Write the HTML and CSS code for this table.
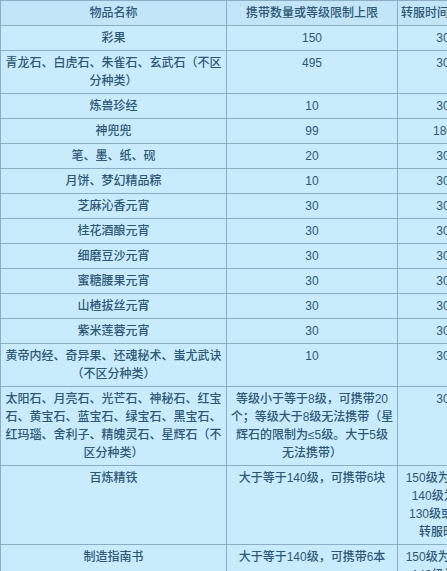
FILE: index.html
```html
<!DOCTYPE html>
<html lang="zh-CN">
<head>
<meta charset="utf-8">
<title>物品携带限制</title>
<link rel="stylesheet" href="styles.css">
</head>
<body>
<div class="frame">
<table class="limits">
  <colgroup>
    <col class="c-name">
    <col class="c-limit">
    <col class="c-time">
  </colgroup>
  <thead>
    <tr><th>物品名称</th><th>携带数量或等级限制上限</th><th>转服时间（天）</th></tr>
  </thead>
  <tbody>
    <tr><td>彩果</td><td>150</td><td>30</td></tr>
    <tr><td><span class="nw">青龙石、白虎石、朱雀石、玄武石（不区</span><br>分种类）</td><td>495</td><td>30</td></tr>
    <tr><td>炼兽珍经</td><td>10</td><td>30</td></tr>
    <tr><td>神兜兜</td><td>99</td><td>180</td></tr>
    <tr><td>笔、墨、纸、砚</td><td>20</td><td>30</td></tr>
    <tr><td>月饼、梦幻精品粽</td><td>10</td><td>30</td></tr>
    <tr><td>芝麻沁香元宵</td><td>30</td><td>30</td></tr>
    <tr><td>桂花酒酿元宵</td><td>30</td><td>30</td></tr>
    <tr><td>细磨豆沙元宵</td><td>30</td><td>30</td></tr>
    <tr><td>蜜糖腰果元宵</td><td>30</td><td>30</td></tr>
    <tr><td>山楂拔丝元宵</td><td>30</td><td>30</td></tr>
    <tr><td>紫米莲蓉元宵</td><td>30</td><td>30</td></tr>
    <tr><td><span class="nw">黄帝内经、奇异果、还魂秘术、蚩尤武诀</span><br>（不区分种类）</td><td>10</td><td>30</td></tr>
    <tr>
      <td><span class="nw">太阳石、月亮石、光芒石、神秘石、红宝</span><br><span class="nw">石、黄宝石、蓝宝石、绿宝石、黑宝石、</span><br><span class="nw">红玛瑙、舍利子、精魄灵石、星辉石（不</span><br>区分种类）</td>
      <td><span class="nw">等级小于等于8级，可携带20</span><br><span class="nw">个；等级大于8级无法携带（星</span><br><span class="nw">辉石的限制为≤5级。大于5级</span><br>无法携带）</td>
      <td>30</td>
    </tr>
    <tr>
      <td>百炼精铁</td>
      <td><span class="nw">大于等于140级，可携带6块</span></td>
      <td><span class="nw">150级为7天，</span><br><span class="nw">140级为7天</span><br><span class="nw">130级或以下</span><br><span class="nw">转服时间</span></td>
    </tr>
    <tr>
      <td>制造指南书</td>
      <td><span class="nw">大于等于140级，可携带6本</span></td>
      <td><span class="nw">150级为7天，</span><br><span class="nw">140级为7天</span><br><span class="nw">130级或以下</span><br><span class="nw">转服时间</span></td>
    </tr>
  </tbody>
</table>
</div>
</body>
</html>
```

FILE: styles.css
```css
html, body {
  margin: 0;
  padding: 0;
  background: #c8ecfb;
}

body {
  width: 447px;
  height: 571px;
  overflow: hidden;
}

.frame {
  width: 447px;
  height: 571px;
  overflow: hidden;
}

.limits {
  border-collapse: collapse;
  table-layout: fixed;
  width: 488px;
  background: #c8ecfb;
  color: #2e5877;
  font-family: "Liberation Sans", "Noto Sans CJK SC", sans-serif;
  font-size: 12px;
  line-height: 18px;
}

.c-name { width: 226px; }
.c-limit { width: 171px; }
.c-time { width: 91px; }

.limits th,
.limits td {
  border: 1px solid #8aaec6;
  padding: 3px 2px;
  text-align: center;
  vertical-align: top;
  overflow: hidden;
}

.limits th {
  font-weight: 500;
  background: #c2e6f7;
}

.limits td {
  font-weight: 500;
}

.nw {
  white-space: nowrap;
}
```
